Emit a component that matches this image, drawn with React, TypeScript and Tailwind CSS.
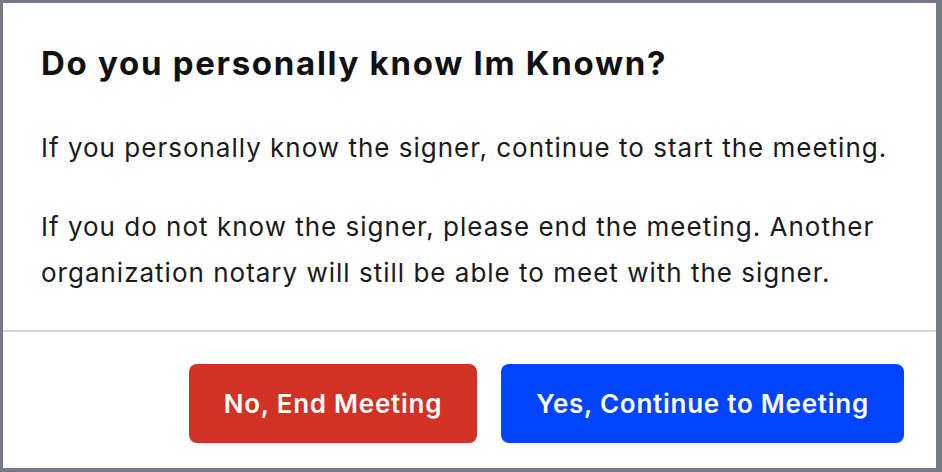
export default function App() {
  return (
    <div className="flex h-[472px] w-[942px] flex-col border-t-[3px] border-r-[6px] border-b-[4px] border-l-[3px] border-[#737b87] bg-white font-['Inter',sans-serif] text-[#1a1a1a]">
      <div className="px-[38px] pt-[40px] pb-[34px]">
        <h2 className="text-[33px] leading-[40px] font-bold tracking-[1.7px] text-[#111111]">
          Do you personally know Im Known?
        </h2>
        <p className="mt-[42px] text-[26px] leading-[46px] tracking-[1px]">
          If you personally know the signer, continue to start the meeting.
        </p>
        <p className="mt-[33px] text-[26px] leading-[46px] tracking-[1px]">
          If you do not know the signer, please end the meeting. Another organization notary will
          still be able to meet with the signer.
        </p>
      </div>
      <div className="h-[2px] bg-[#d6d6d0]" />
      <div className="flex justify-end gap-[24px] pt-[32px] pr-[32px]">
        <button className="h-[79px] rounded-[8px] bg-[#d13223] px-[35px] text-[26px] font-semibold tracking-[0.75px] text-white">
          No, End Meeting
        </button>
        <button className="h-[79px] rounded-[8px] bg-[#0044ff] px-[35px] text-[26px] font-semibold tracking-[0.75px] text-white">
          Yes, Continue to Meeting
        </button>
      </div>
    </div>
  )
}
